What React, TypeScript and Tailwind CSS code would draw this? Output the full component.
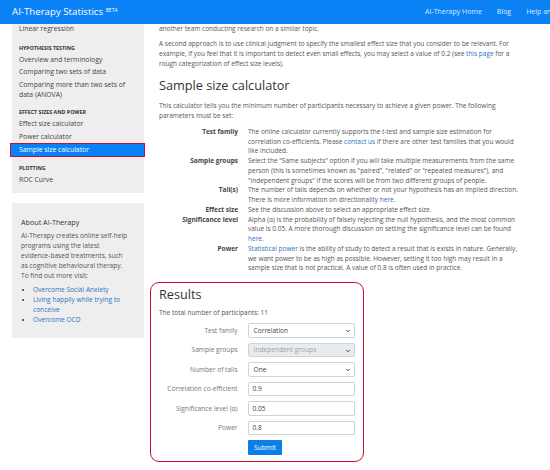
import { ChevronDown } from 'lucide-react'

const navLinks = ['AI-Therapy Home', 'Blog', 'Help and support']

type SideEntry = { kind: 'head'; label: string } | { kind: 'item'; label: string; lines?: string[]; active?: boolean }

const sideEntries: SideEntry[] = [
  { kind: 'item', label: 'Linear regression' },
  { kind: 'head', label: 'Hypothesis testing' },
  { kind: 'item', label: 'Overview and terminology' },
  { kind: 'item', label: 'Comparing two sets of data' },
  { kind: 'item', label: 'Comparing more than two sets of data (ANOVA)', lines: ['Comparing more than two sets of', 'data (ANOVA)'] },
  { kind: 'head', label: 'Effect sizes and power' },
  { kind: 'item', label: 'Effect size calculator' },
  { kind: 'item', label: 'Power calculator' },
  { kind: 'item', label: 'Sample size calculator', active: true },
  { kind: 'head', label: 'Plotting' },
  { kind: 'item', label: 'ROC Curve' },
]

function Link({ children }: { children: React.ReactNode }) {
  return <span className="text-[#2f72c0]">{children}</span>
}

function Sidebar() {
  return (
    <div className="w-[132px] ml-[12px] shrink-0">
      <div className="bg-[#eeeeee] pb-[7px]">
        {sideEntries.map((e, i) =>
          e.kind === 'head' ? (
            <div
              key={i}
              className="px-[7px] mt-[7px] mb-[1.65px] text-[5.3px] leading-[8px] font-bold uppercase text-[#333]"
            >
              {e.label}
            </div>
          ) : e.active ? (
            <div
              key={i}
              className="-ml-[2px] -mr-[1px] pl-[8px] py-[0.6px] bg-[#0a82f5] border border-[#c8102e] text-white text-[6.8px] leading-[10px]"
            >
              {e.label}
            </div>
          ) : (
            <div
              key={i}
              className={`px-[7px] text-[6.8px] leading-[10px] text-[#444] ${i === 0 ? 'pb-[2.7px]' : 'py-[1.35px]'}`}
            >
              {e.lines ? e.lines.map((l) => <div key={l}>{l}</div>) : e.label}
            </div>
          )
        )}
      </div>

      <div className="mt-[10px] bg-[#eeeeee] pt-[14px] pb-[13px] px-[9px]">
        <div className="text-[7.2px] leading-[10px] text-[#333]">About AI-Therapy</div>
        <p className="mt-[4px] text-[6.6px] leading-[10px] text-[#555]">
          AI-Therapy creates online self-help
          <br />
          programs using the latest
          <br />
          evidence-based treatments, such
          <br />
          as cognitive behavioural therapy.
          <br />
          To find out more visit:
        </p>
        <ul className="mt-[4px] pl-[12px] list-disc text-[6.6px] leading-[10px] text-[#2f72c0] marker:text-[#333]">
          <li>Overcome Social Anxiety</li>
          <li>
            Living happily while trying to
            <br />
            conceive
          </li>
          <li>Overcome OCD</li>
        </ul>
      </div>
    </div>
  )
}

const params: { label: string; lines: React.ReactNode[] }[] = [
  {
    label: 'Test family',
    lines: [
      <>The online calculator currently supports the <i>t</i>-test and sample size estimation for</>,
      <>correlation co-efficients. Please <Link>contact us</Link> if there are other test families that you would</>,
      <>like included.</>,
    ],
  },
  {
    label: 'Sample groups',
    lines: [
      <>Select the "Same subjects" option if you will take multiple measurements from the same</>,
      <>person (this is sometimes known as "paired", "related" or "repeated measures"), and</>,
      <>"independent groups" if the scores will be from two different groups of people.</>,
    ],
  },
  {
    label: 'Tail(s)',
    lines: [
      <>The number of tails depends on whether or not your hypothesis has an implied direction.</>,
      <>There is more information on directionality <Link>here</Link>.</>,
    ],
  },
  {
    label: 'Effect size',
    lines: [<>See the discussion above to select an appropriate effect size.</>],
  },
  {
    label: 'Significance level',
    lines: [
      <>Alpha (α) is the probability of falsely rejecting the null hypothesis, and the most common</>,
      <>value is 0.05. A more thorough discussion on setting the significance level can be found</>,
      <><Link>here</Link>.</>,
    ],
  },
  {
    label: 'Power',
    lines: [
      <><Link>Statistical power</Link> is the ability of study to detect a result that is exists in nature. Generally,</>,
      <>we want power to be as high as possible. However, setting it too high may result in a</>,
      <>sample size that is not practical. A value of 0.8 is often used in practice.</>,
    ],
  },
]

function SelectBox({ value, disabled }: { value: string; disabled?: boolean }) {
  return (
    <div
      className={`relative w-[108px] h-[14.5px] border border-[#cfd4da] rounded-[2px] flex items-center pl-[5px] text-[6.6px] ${
        disabled ? 'bg-[#e9ecef] text-[#9aa0a6]' : 'bg-white text-[#444]'
      }`}
    >
      {value}
      <ChevronDown className="absolute right-[3px] top-[4px] w-[6px] h-[6px] text-[#333]" strokeWidth={3.5} />
    </div>
  )
}

function InputBox({ value }: { value: string }) {
  return (
    <div className="w-[108px] h-[14.5px] border border-[#cfd4da] rounded-[2px] bg-white flex items-center pl-[4px] text-[6.6px] text-[#444]">
      {value}
    </div>
  )
}

function FormRow({ label, children }: { label: string; children: React.ReactNode }) {
  return (
    <div className="flex items-center">
      <div className="w-[89px] pr-[10px] text-right text-[6.6px] text-[#777] whitespace-nowrap">{label}</div>
      {children}
    </div>
  )
}

function Results() {
  return (
    <div className="mt-[8.6px] -ml-[9px] w-[214px] h-[180px] border-[1.5px] border-[#c8102e] rounded-[9px] pt-[4px] px-[8px]">
      <h3 className="text-[12.7px] leading-[15px] text-[#333]">Results</h3>
      <p className="mt-[6.6px] text-[6.5px] leading-[9.75px] text-[#555]">The total number of participants: 11</p>
      <div className="mt-[5px] flex flex-col gap-[5px]">
        <FormRow label="Test family">
          <SelectBox value="Correlation" />
        </FormRow>
        <FormRow label="Sample groups">
          <SelectBox value="Independent groups" disabled />
        </FormRow>
        <FormRow label="Number of tails">
          <SelectBox value="One" />
        </FormRow>
        <FormRow label="Correlation co-efficient">
          <InputBox value="0.9" />
        </FormRow>
        <FormRow label="Significance level (α)">
          <InputBox value="0.05" />
        </FormRow>
        <FormRow label="Power">
          <InputBox value="0.8" />
        </FormRow>
        <div className="pl-[89px]">
          <button className="w-[34px] h-[15px] bg-[#0a7fe6] text-white text-[6.6px] font-medium rounded-[1px]">
            Submit
          </button>
        </div>
      </div>
    </div>
  )
}

function MainContent() {
  return (
    <div className="ml-[15px] w-[380px] text-[6.5px] leading-[9.75px] text-[#555] whitespace-nowrap">
      <p>another team conducting research on a similar topic.</p>
      <p className="mt-[5.4px]">
        A second approach is to use clinical judgment to specify the smallest effect size that you consider to be relevant. For
        <br />
        example, if you feel that it is important to detect even small effects, you may select a value of 0.2 (see{' '}
        <Link>this page</Link> for a
        <br />
        rough categorization of effect size levels).
      </p>
      <h2 className="mt-[10px] text-[12.7px] leading-[15px] text-[#333]">Sample size calculator</h2>
      <p className="mt-[7.6px]">
        This calculator tells you the minimum number of participants necessary to achieve a given power. The following
        <br />
        parameters must be set:
      </p>
      <div className="mt-[6.5px] grid grid-cols-[79px_1fr] gap-x-[10px]">
        {params.map((p) => (
          <div key={p.label} className="contents">
            <div className="text-right font-bold text-[#444]">{p.label}</div>
            <div>
              {p.lines.map((l, i) => (
                <div key={i}>{l}</div>
              ))}
            </div>
          </div>
        ))}
      </div>
      <Results />
    </div>
  )
}

export default function App() {
  return (
    <div className="w-[550px] h-[470px] overflow-hidden bg-white font-['Open_Sans',sans-serif]">
      <div className="h-[24px] bg-[#0a82f5] flex items-center whitespace-nowrap overflow-hidden">
        <div className="w-[425px] shrink-0 pl-[12px] text-white text-[9.7px]">
          AI-Therapy Statistics <span className="relative -top-[2.5px] text-[5px]">BETA</span>
        </div>
        <div className="flex gap-[15px] text-[7px] text-[#dce9ff]">
          {navLinks.map((l) => (
            <span key={l}>{l}</span>
          ))}
        </div>
      </div>
      <div className="flex">
        <Sidebar />
        <MainContent />
      </div>
    </div>
  )
}
